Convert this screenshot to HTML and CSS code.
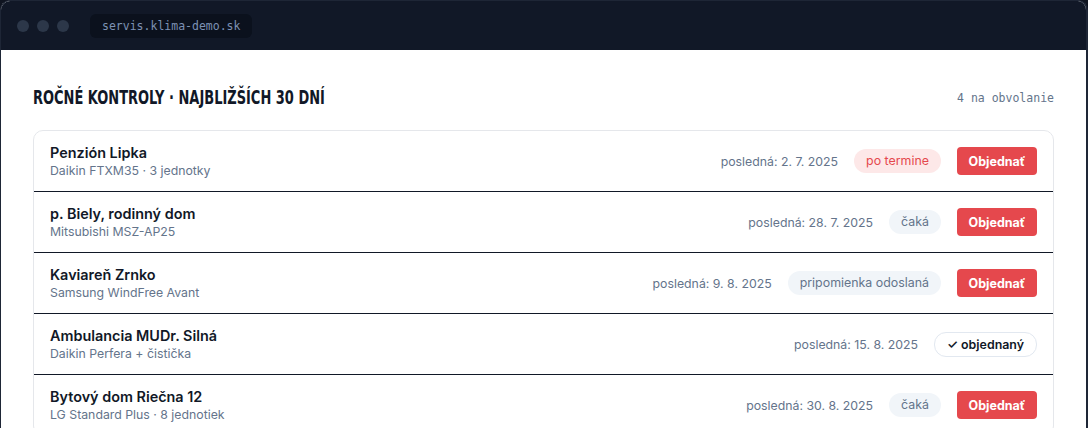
FILE: index.html
```html
<!DOCTYPE html>
<html lang="sk">
<head>
<meta charset="utf-8">
<title>Ročné kontroly</title>
<link rel="stylesheet" href="styles.css">
</head>
<body>
<div class="window">
  <div class="topbar">
    <div class="dots"><span class="dot"></span><span class="dot"></span><span class="dot"></span></div>
    <div class="url">servis.klima-demo.sk</div>
  </div>
  <main class="content">
    <div class="head">
      <h1 class="title"><span class="title-text">Ročné kontroly · najbližších 30 dní</span></h1>
      <span class="count">4 na obvolanie</span>
    </div>
    <div class="list">
      <div class="row">
        <div class="info"><div class="name">Penzión Lipka</div><div class="sub">Daikin FTXM35 · 3 jednotky</div></div>
        <div class="meta"><span class="date">posledná: 2. 7. 2025</span><span class="badge badge-late">po termine</span><button class="btn">Objednať</button></div>
      </div>
      <div class="row">
        <div class="info"><div class="name">p. Biely, rodinný dom</div><div class="sub">Mitsubishi MSZ-AP25</div></div>
        <div class="meta"><span class="date">posledná: 28. 7. 2025</span><span class="badge">čaká</span><button class="btn">Objednať</button></div>
      </div>
      <div class="row">
        <div class="info"><div class="name">Kaviareň Zrnko</div><div class="sub">Samsung WindFree Avant</div></div>
        <div class="meta"><span class="date">posledná: 9. 8. 2025</span><span class="badge">pripomienka odoslaná</span><button class="btn">Objednať</button></div>
      </div>
      <div class="row">
        <div class="info"><div class="name">Ambulancia MUDr. Silná</div><div class="sub">Daikin Perfera + čistička</div></div>
        <div class="meta"><span class="date">posledná: 15. 8. 2025</span><span class="badge badge-done">✓ objednaný</span></div>
      </div>
      <div class="row">
        <div class="info"><div class="name">Bytový dom Riečna 12</div><div class="sub">LG Standard Plus · 8 jednotiek</div></div>
        <div class="meta"><span class="date">posledná: 30. 8. 2025</span><span class="badge">čaká</span><button class="btn">Objednať</button></div>
      </div>
    </div>
  </main>
</div>
</body>
</html>
```

FILE: styles.css
```css
* { box-sizing: border-box; }
html, body { margin: 0; padding: 0; }
body {
  background: #0f1420;
  font-family: Inter, "Noto Sans", sans-serif;
  height: 428px;
  overflow: hidden;
}
.window {
  background: #ffffff;
  border: 1px solid #1e2636;
  border-right-width: 2px;
  border-radius: 10px 10px 0 0;
  overflow: hidden;
  height: 460px;
}
.topbar {
  height: 49px;
  background: #111827;
  display: flex;
  align-items: center;
  padding-left: 16px;
  gap: 21px;
}
.dots { display: flex; gap: 8px; }
.dot {
  width: 12px; height: 12px; border-radius: 50%;
  background: #2c3749;
}
.url {
  background: #0b111d;
  color: #7d92b4;
  font-family: "DejaVu Sans Mono", "Liberation Mono", monospace;
  font-size: 11.5px;
  height: 24px;
  line-height: 24px;
  padding: 0 12px;
  border-radius: 6px;
}
.content { padding: 0 32px; }
.head {
  display: flex;
  justify-content: space-between;
  align-items: center;
  height: 80px;
  padding-top: 14px;
}
.title {
  margin: 0;
  font-family: "DejaVu Sans Condensed", "DejaVu Sans", sans-serif;
  font-weight: 700;
  font-size: 19px;
  line-height: 22px;
  text-transform: uppercase;
  color: #111827;
}
.title-text {
  display: inline-block;
  transform: scaleX(0.76);
  transform-origin: left center;
  white-space: nowrap;
}
.count {
  font-family: "DejaVu Sans Mono", "Liberation Mono", monospace;
  font-size: 11.5px;
  color: #64748b;
  padding-top: 2px;
}
.list {
  border: 1px solid #e5e7eb;
  border-radius: 10px;
}
.row {
  display: flex;
  justify-content: space-between;
  align-items: center;
  height: 61px;
  padding: 0 16px;
  border-top: 1px solid #111827;
}
.row:first-child { border-top: none; height: 60px; }
.name {
  font-size: 14.4px;
  font-weight: 600;
  color: #111827;
  line-height: 18px;
}
.sub {
  font-size: 12.3px;
  color: #64748b;
  line-height: 16px;
  margin-top: 1px;
}
.meta {
  display: flex;
  align-items: center;
  gap: 16px;
}
.date { font-size: 12.3px; color: #64748b; }
.badge {
  font-size: 12.4px;
  color: #64748b;
  background: #f1f5f9;
  height: 24px;
  line-height: 24px;
  padding: 0 12px;
  border-radius: 12px;
}
.badge-late { background: #fde8e8; color: #e5484d; }
.badge-done {
  background: #ffffff;
  border: 1px solid #e2e8f0;
  color: #111827;
  font-weight: 600;
  line-height: 23px;
  height: 25px;
}
.btn {
  font-family: inherit;
  font-size: 12.5px;
  font-weight: 700;
  color: #ffffff;
  background: #e5484d;
  border: none;
  border-radius: 4px;
  height: 28px;
  width: 80px;
  padding: 0;
}
```
